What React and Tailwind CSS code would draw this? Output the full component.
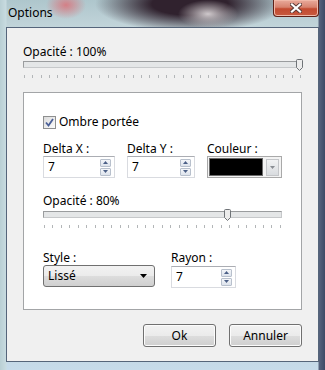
const ticks = (n) => Array.from({ length: n }, (_, i) => i);

const Thumb = () => (
  <svg width="7" height="12" viewBox="0 0 7 12">
    <path d="M0.5 1.5 Q0.5 0.5 1.5 0.5 H5.5 Q6.5 0.5 6.5 1.5 V8.5 L3.5 11.5 L0.5 8.5 Z" fill="#ececec" stroke="#6f7377" />
  </svg>
);

const Slider = ({ width, count, thumbLeft }) => (
  <div className="relative" style={{ width }}>
    <div className="h-[7px] border border-[#c6c8ca] border-t-[#9a9c9e] border-l-[#9a9c9e] bg-[#e4e6e7]" />
    <div className="absolute top-[-2px]" style={{ left: thumbLeft }}>
      <Thumb />
    </div>
    <div className="flex justify-between px-[1px] mt-[7px] h-[4px]">
      {ticks(count).map((i) => (
        <div key={i} className="w-[1px] h-[3px] bg-[#b3b6b8]" />
      ))}
    </div>
  </div>
);

const Arrow = ({ up }) => (
  <svg width="5" height="3" viewBox="0 0 5 3">
    <path d={up ? "M0 3 L2.5 0 L5 3 Z" : "M0 0 L5 0 L2.5 3 Z"} fill="#4b5f86" />
  </svg>
);

const Spin = ({ width }) => (
  <div
    className="h-[22px] flex items-center justify-between pl-[4px] pr-[3px] bg-white border border-[#d9dbe0] border-t-[#abadb3]"
    style={{ width }}
  >
    <span className="text-[12px] leading-none">7</span>
    <div className="flex flex-col gap-[1px]">
      <div className="w-[11px] h-[8px] flex items-center justify-center border border-[#b8c0cc] bg-[linear-gradient(#f4f6f9,#dde3ec)] rounded-[1px]">
        <Arrow up />
      </div>
      <div className="w-[11px] h-[8px] flex items-center justify-center border border-[#b8c0cc] bg-[linear-gradient(#f4f6f9,#dde3ec)] rounded-[1px]">
        <Arrow />
      </div>
    </div>
  </div>
);

const Button = ({ children }) => (
  <div className="w-[73px] h-[23px] flex items-center justify-center rounded-[3px] border border-[#707070] bg-[linear-gradient(#f2f2f2_0%,#ebebeb_50%,#dddddd_51%,#cfcfcf_100%)] text-[12px] shadow-[inset_0_0_0_1px_#fcfcfc]">
    {children}
  </div>
);

export default function App() {
  return (
    <div className="w-[325px] h-[370px] flex flex-col overflow-hidden text-black font-['Noto_Sans',sans-serif] bg-[radial-gradient(ellipse_20px_14px_at_66px_5px,#d47f86,transparent),radial-gradient(ellipse_30px_14px_at_208px_14px,#cfc9cc,transparent),radial-gradient(ellipse_95px_28px_at_190px_4px,#30222e_40%,transparent),linear-gradient(to_right,#b9cfd4_0px,#c8dbe0_6px,transparent_7px,transparent_318px,#56637e_319px,#3e4a66_325px),linear-gradient(#aec6cc,#c4d6db_30px,#b9ccd6_300px,#c6dbea)]">
      {/* title bar */}
      <div className="h-[27px] shrink-0 flex items-start justify-between pl-[8px] pr-[6px]">
        <span className="mt-[5px] text-[12px] leading-[16px]">Options</span>
        <div className="w-[46px] h-[17px] flex items-center justify-center rounded-b-[4px] border border-t-0 border-[#5e2118] bg-[linear-gradient(#e9ab9c_0%,#d7826e_45%,#c34a30_55%,#c75a3f_100%)] shadow-[inset_0_0_0_1px_#f0b8a8]">
          <svg width="12" height="10" viewBox="0 0 12 10">
            <path d="M2 1.5 L10 8.5 M10 1.5 L2 8.5" stroke="#5a3a36" strokeWidth="4" strokeLinecap="square" />
            <path d="M2 1.5 L10 8.5 M10 1.5 L2 8.5" stroke="#ffffff" strokeWidth="2.2" strokeLinecap="square" />
          </svg>
        </div>
      </div>

      {/* client area */}
      <div className="flex-1 mx-[6px] mb-[8px] flex flex-col bg-[#f0f0f0] border border-[#55657a] px-[16px] pt-[16px]">
        <div className="text-[12px] leading-[16px]">Opacité : 100%</div>
        <div className="mt-[1px]">
          <Slider width={279} count={34} thumbLeft={273} />
        </div>

        {/* panel */}
        <div className="mt-[13px] w-[279px] bg-white border border-[#a3a5a7] pt-[21px] pb-[21px] px-[19px] flex flex-col">
          <div className="flex items-center h-[16px]">
            <div className="w-[13px] h-[13px] border border-[#8e8f8f] bg-[linear-gradient(135deg,#dcdcdc,#fbfbfb)] flex items-center justify-center">
              <svg width="9" height="9" viewBox="0 0 9 9">
                <path d="M1 4.5 L3.5 7.5 L8 1" fill="none" stroke="#4a5f97" strokeWidth="1.8" />
              </svg>
            </div>
            <span className="ml-[3px] text-[12px]">Ombre portée</span>
          </div>

          <div className="mt-[11px] flex gap-[12px]">
            <div className="flex flex-col">
              <span className="text-[12px] leading-[15px]">Delta X :</span>
              <Spin width={72} />
            </div>
            <div className="flex flex-col">
              <span className="text-[12px] leading-[15px]">Delta Y :</span>
              <Spin width={68} />
            </div>
            <div className="flex flex-col">
              <span className="text-[12px] leading-[15px]">Couleur :</span>
              <div className="w-[75px] h-[22px] border border-[#a9a9a9] bg-[#f3f3f3] flex items-center px-[1px] gap-[3px]">
                <div className="w-[54px] h-[18px] bg-black border border-[#6a6a6a]" />
                <div className="w-[13px] h-[17px] border border-[#c4c6c9] bg-[linear-gradient(#f1f2f3,#d9dcdf)] flex items-center justify-center">
                  <svg width="5" height="3" viewBox="0 0 5 3">
                    <path d="M0 0 L5 0 L2.5 3 Z" fill="#8a8e93" />
                  </svg>
                </div>
              </div>
            </div>
          </div>

          <div className="mt-[15px] text-[12px] leading-[16px]">Opacité : 80%</div>
          <div className="mt-[2px]">
            <Slider width={239} count={29} thumbLeft={181} />
          </div>

          <div className="mt-[21px] flex gap-[16px]">
            <div className="flex flex-col">
              <span className="text-[12px] leading-[15px]">Style :</span>
              <div className="w-[112px] h-[22px] rounded-[3px] border border-[#707070] bg-[linear-gradient(#f2f2f2_0%,#ebebeb_50%,#dddddd_51%,#cfcfcf_100%)] flex items-center justify-between pl-[4px] pr-[7px]">
                <span className="text-[12px]">Lissé</span>
                <svg width="7" height="4" viewBox="0 0 7 4">
                  <path d="M0 0 L7 0 L3.5 4 Z" fill="#000" />
                </svg>
              </div>
            </div>
            <div className="flex flex-col">
              <span className="text-[12px] leading-[15px]">Rayon :</span>
              <div className="mt-[1px]">
                <Spin width={65} />
              </div>
            </div>
          </div>
        </div>

        <div className="mt-[14px] flex justify-end gap-[13px] pr-[0px]">
          <Button>Ok</Button>
          <Button>Annuler</Button>
        </div>
      </div>
    </div>
  );
}
